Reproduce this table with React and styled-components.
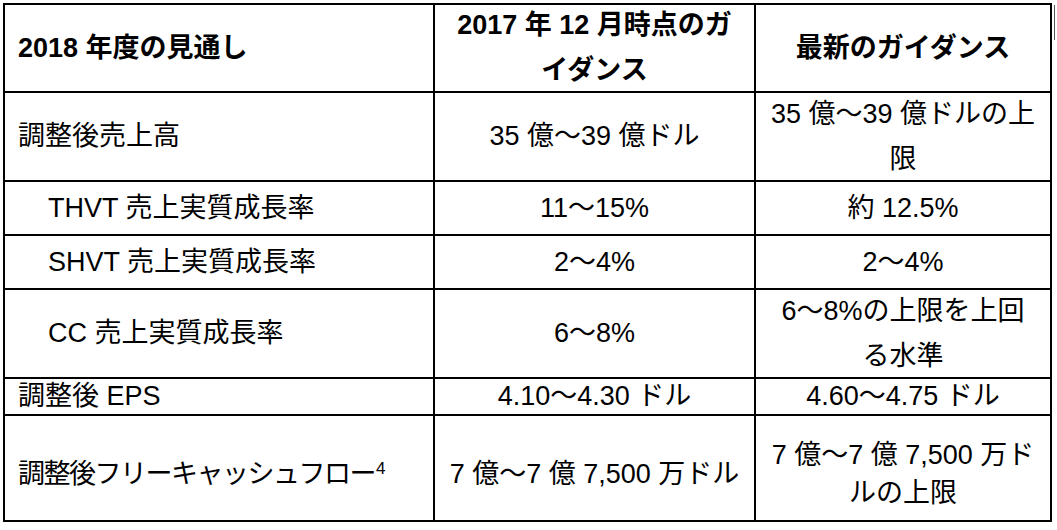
import React from "react";
import styled, { createGlobalStyle } from "styled-components";

const Global = createGlobalStyle`
  html, body { margin: 0; padding: 0; background: #fff; }
  body { font-family: "Liberation Sans", "Noto Sans CJK JP", sans-serif; color: #000; }
`;

const Page = styled.div`
  position: relative;
  padding: 3px 0 0 3px;
  width: 1057px;
  height: 530px;
  box-sizing: border-box;
  &::after {
    content: "";
    position: absolute;
    left: 1054px;
    top: 5px;
    width: 1px;
    height: 35px;
    background: #555;
  }
`;

const Table = styled.div`
  display: grid;
  grid-template-columns: 428px 319px 294px;
  grid-template-rows: 86px 87px 52px 52px 87px 35px 104px;
  gap: 2px;
  padding: 2px;
  background: #000;
  width: max-content;
`;

const Cell = styled.div`
  background: #fff;
  display: flex;
  flex-direction: column;
  justify-content: center;
  align-items: ${(p) => (p.$center ? "center" : "flex-start")};
  text-align: ${(p) => (p.$center ? "center" : "left")};
  padding: ${(p) => (p.$indent ? "0 0 0 43px" : p.$center ? "0" : "0 0 0 13px")};
  padding-top: ${(p) => p.$dy || 0}px;
  font-size: 27px;
  line-height: ${(p) => p.$lh || 45}px;
  font-weight: ${(p) => (p.$head ? 700 : 400)};
  letter-spacing: ${(p) => p.$ls || 0}px;
  white-space: nowrap;
  box-sizing: border-box;
`;

const Sup = styled.sup`
  font-size: 17px;
  line-height: 0;
  vertical-align: 9px;
  letter-spacing: 0;
  margin-left: 1px;
`;

const rows = [
  {
    label: "調整後売上高",
    mid: ["35 億～39 億ドル"],
    right: ["35 億～39 億ドルの上", "限"],
  },
  { label: "THVT 売上実質成長率", indent: true, mid: ["11～15%"], right: ["約 12.5%"] },
  { label: "SHVT 売上実質成長率", indent: true, mid: ["2～4%"], right: ["2～4%"] },
  {
    label: "CC 売上実質成長率",
    indent: true,
    mid: ["6～8%"],
    right: ["6～8%の上限を上回", "る水準"],
  },
  { label: "調整後 EPS", mid: ["4.10～4.30 ドル"], right: ["4.60～4.75 ドル"] },
  {
    label: "調整後フリーキャッシュフロー",
    sup: "4",
    ls: -1.5,
    mid: ["7 億～7 億 7,500 万ドル"],
    right: ["7 億～7 億 7,500 万ド", "ルの上限"],
    lh: 38,
    dy: 12,
  },
];

const Lines = ({ lines }) =>
  lines.map((l, i) => <span key={i}>{l}</span>);

export default function App() {
  return (
    <Page>
      <Global />
      <Table>
        <Cell $head>2018 年度の見通し</Cell>
        <Cell $head $center>
          <span>2017 年 12 月時点のガ</span>
          <span>イダンス</span>
        </Cell>
        <Cell $head $center>最新のガイダンス</Cell>
        {rows.map((r, i) => (
          <React.Fragment key={i}>
            <Cell $indent={r.indent} $dy={r.dy} $ls={r.ls}>
              <span>
                {r.label}
                {r.sup && <Sup>{r.sup}</Sup>}
              </span>
            </Cell>
            <Cell $center $dy={r.dy}>
              <Lines lines={r.mid} />
            </Cell>
            <Cell $center $lh={r.lh} $dy={r.dy}>
              <Lines lines={r.right} />
            </Cell>
          </React.Fragment>
        ))}
      </Table>
    </Page>
  );
}
